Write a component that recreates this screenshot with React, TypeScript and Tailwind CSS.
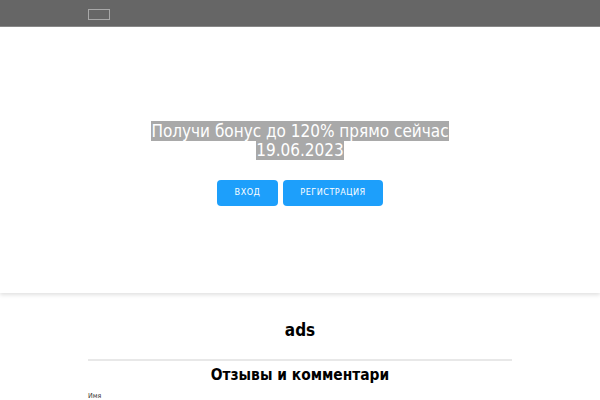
export default function App() {
  return (
    <div className="min-h-[400px] bg-white font-stretch-condensed" style={{ fontFamily: '"DejaVu Sans Condensed", "DejaVu Sans", sans-serif' }}>
      <header className="h-[27px] bg-[#666666] border-b border-[#8a8a8a]">
        <div className="mx-auto w-[424px] pt-[9px]">
          <div className="h-[11px] w-[22px] border border-[#a8a8a8]" />
        </div>
      </header>
      <section className="h-[266px] flex flex-col items-center justify-center shadow-[0_2px_4px_rgba(0,0,0,0.12)] relative">
        <h1 className="text-center text-[17px] leading-[19px] text-white font-normal mt-[8px]">
          <span className="bg-[#a9a9a9]">Получи бонус до 120% прямо сейчас</span>
          <br />
          <span className="bg-[#a9a9a9]">19.06.2023</span>
        </h1>
        <div className="flex gap-[5px] mt-[20px]">
          <button className="w-[61px] h-[26px] rounded-[4px] bg-[#1d9ffb] text-white text-[9px] tracking-[0.5px]">ВХОД</button>
          <button className="w-[100px] h-[26px] rounded-[4px] bg-[#1d9ffb] text-white text-[9px] tracking-[0.5px]">РЕГИСТРАЦИЯ</button>
        </div>
      </section>
      <main className="mx-auto w-[424px] pt-[27px]">
        <h2 className="text-center text-[17px] font-bold leading-[20px] text-black">ads</h2>
        <div className="mt-[19px] h-[2px] bg-[#e8e8e8]" />
        <h3 className="mt-[5px] text-center text-[15.4px] font-bold leading-[18px] text-black">Отзывы и комментари</h3>
        <div className="mt-[8px] text-[7px] leading-[8px] text-[#333]">Имя</div>
      </main>
    </div>
  );
}
